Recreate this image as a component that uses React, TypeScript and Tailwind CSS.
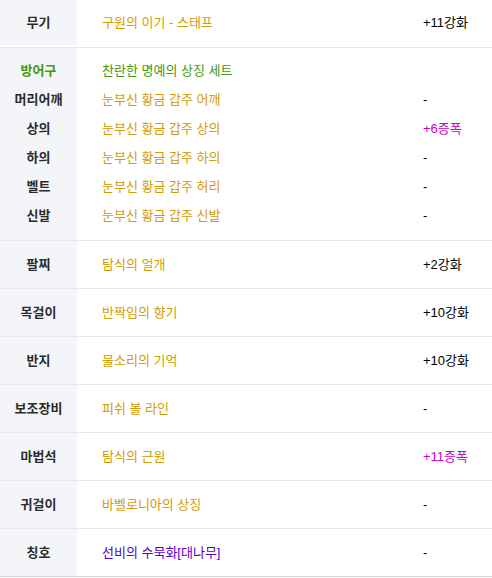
import React from "react";

type Row = { label: string; labelColor?: string; name: string; nameColor: string; extra: string; extraColor?: string };

const ORANGE = "text-[#d39b00]";

const Cell = ({ r }: { r: Row }) => (
  <>
    <div className={`w-[77px] shrink-0 bg-[#f4f5f9] flex items-center justify-center font-bold ${r.labelColor ?? "text-[#2b2b2b]"}`}>
      {r.label}
    </div>
    <div className={`flex-1 pl-[25px] flex items-center ${r.nameColor}`}>{r.name}</div>
    <div className={`w-[69px] shrink-0 flex items-center ${r.extraColor ?? "text-black"}`}>{r.extra}</div>
  </>
);

const SingleRow = ({ r, last }: { r: Row; last?: boolean }) => (
  <div className={`flex h-[48px] border-b ${last ? "border-[#d2d3da]" : "border-[#e8e8ec]"}`}>
    <Cell r={r} />
  </div>
);

const armor: Row[] = [
  { label: "방어구", labelColor: "text-[#45980f]", name: "찬란한 명예의 상징 세트", nameColor: "text-[#45980f]", extra: "" },
  { label: "머리어깨", name: "눈부신 황금 갑주 어깨", nameColor: ORANGE, extra: "-" },
  { label: "상의", name: "눈부신 황금 갑주 상의", nameColor: ORANGE, extra: "+6증폭", extraColor: "text-[#cc00cc]" },
  { label: "하의", name: "눈부신 황금 갑주 하의", nameColor: ORANGE, extra: "-" },
  { label: "벨트", name: "눈부신 황금 갑주 허리", nameColor: ORANGE, extra: "-" },
  { label: "신발", name: "눈부신 황금 갑주 신발", nameColor: ORANGE, extra: "-" },
];

const rest: Row[] = [
  { label: "팔찌", name: "탐식의 얼개", nameColor: ORANGE, extra: "+2강화" },
  { label: "목걸이", name: "반짝임의 향기", nameColor: ORANGE, extra: "+10강화" },
  { label: "반지", name: "물소리의 기억", nameColor: ORANGE, extra: "+10강화" },
  { label: "보조장비", name: "피쉬 볼 라인", nameColor: ORANGE, extra: "-" },
  { label: "마법석", name: "탐식의 근원", nameColor: ORANGE, extra: "+11증폭", extraColor: "text-[#cc00cc]" },
  { label: "귀걸이", name: "바벨로니아의 상징", nameColor: ORANGE, extra: "-" },
  { label: "칭호", name: "선비의 수묵화[대나무]", nameColor: "text-[#5500cc]", extra: "-" },
];

export default function App() {
  return (
    <div
      className="w-[492px] h-[578px] bg-white text-[13px] leading-none"
      style={{ fontFamily: '"Liberation Sans", "Noto Sans CJK KR", sans-serif' }}
    >
      <div className="flex h-[48px] border-b border-[#e8e8ec] pb-[2px]">
        <Cell r={{ label: "무기", name: "구원의 이기 - 스태프", nameColor: ORANGE, extra: "+11강화" }} />
      </div>
      <div className="border-b border-[#e8e8ec]">
        <div className="flex h-[8px]">
          <div className="w-[77px] bg-[#f4f5f9]" />
        </div>
        {armor.map((r) => (
          <div key={r.label} className="flex h-[29px]">
            <Cell r={r} />
          </div>
        ))}
        <div className="flex h-[10px]">
          <div className="w-[77px] bg-[#f4f5f9]" />
        </div>
      </div>
      {rest.map((r, i) => (
        <SingleRow key={r.label} r={r} last={i === rest.length - 1} />
      ))}
    </div>
  );
}
